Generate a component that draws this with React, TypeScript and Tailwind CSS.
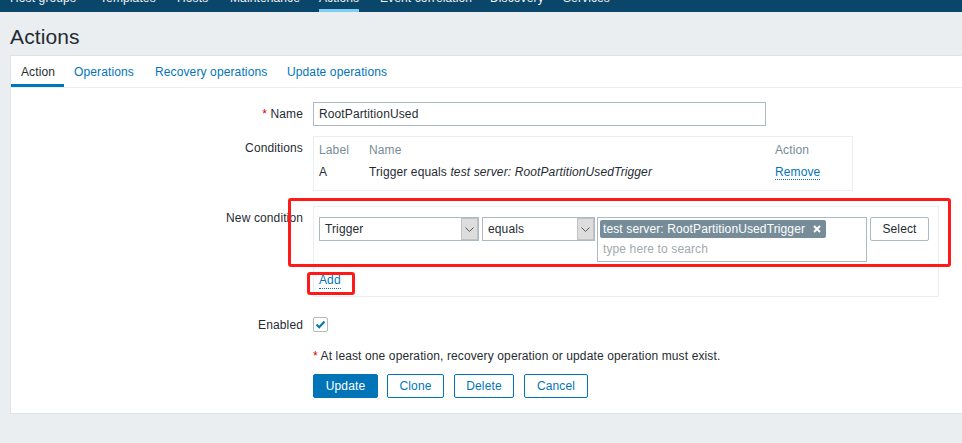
import React from 'react';

const navItems: { label: string; w: string }[] = [
  { label: 'Host groups', w: 'w-[90px]' },
  { label: 'Templates', w: 'w-[77px]' },
  { label: 'Hosts', w: 'w-[53px]' },
  { label: 'Maintenance', w: 'w-[89px]' },
  { label: 'Actions', w: 'w-[61px]' },
  { label: 'Event correlation', w: 'w-[110px]' },
  { label: 'Discovery', w: 'w-[73px]' },
  { label: 'Services', w: 'w-[70px]' },
];

const tabs: { label: string; w: string }[] = [
  { label: 'Action', w: 'w-[53px]' },
  { label: 'Operations', w: 'w-[81px]' },
  { label: 'Recovery operations', w: 'w-[132px]' },
  { label: 'Update operations', w: 'w-[120px]' },
];

const Chevron: React.FC = () => (
  <svg width="9" height="5" viewBox="0 0 9 5" fill="none">
    <path d="M0.5 0.5L4.5 4.5L8.5 0.5" stroke="#5a5a5a" strokeWidth="1" />
  </svg>
);

const SelectBox: React.FC<{ value: string; width: string }> = ({ value, width }) => (
  <div className={`${width} h-[24px] flex border border-[#acbbc2] bg-white`}>
    <div className="flex-1 flex items-center pl-[5px] text-[#1f2c33]">{value}</div>
    <div className="w-[17px] h-full bg-[#dddddd] border border-[#c2c2c2] flex items-center justify-center">
      <Chevron />
    </div>
  </div>
);

const FormRow: React.FC<{ label: React.ReactNode; className?: string; labelClass?: string; children: React.ReactNode }> = ({
  label,
  className = '',
  labelClass = '',
  children,
}) => (
  <div className={`flex ${className}`}>
    <div className={`w-[292px] text-right text-[#1f2c33] leading-[14px] ${labelClass}`}>{label}</div>
    <div className="ml-[10px] flex-1">{children}</div>
  </div>
);

const App: React.FC = () => {
  return (
    <div className="relative w-[962px] h-[443px] overflow-hidden bg-[#ebeef0] font-['Liberation_Sans',Arial,sans-serif] text-[12px] tracking-[0.12px]">
      {/* Top navigation (scrolled, only bottom visible) */}
      <div className="h-[12px] bg-[#0a466a] overflow-hidden flex pl-[10px]">
        {navItems.map((item) => (
          <div key={item.label} className={`h-full shrink-0 ${item.w}`}>
            <div className="relative w-fit mt-[-8px] h-[20px] leading-[12px] text-[#f2f2f2] whitespace-nowrap">
              {item.label}
              {item.label === 'Actions' && <div className="absolute left-0 right-0 top-[17px] h-[3px] bg-[#7fcdf5]" />}
            </div>
          </div>
        ))}
      </div>

      {/* Title */}
      <div className="pt-[13px] pb-[6px] pl-[10px]">
        <h1 className="text-[21px] leading-[24px] text-[#1f2c33]">Actions</h1>
      </div>

      {/* Main container */}
      <div className="ml-[10px] bg-white border border-r-0 border-[#dfe4e7] h-[359px]">
        {/* Tabs */}
        <div className="flex h-[32px] border-b border-[#ebeef0]">
          {tabs.map((t, i) => (
            <div
              key={t.label}
              className={
                i === 0
                  ? `${t.w} h-[31px] pl-[10px] flex items-center text-[#1f2c33] border-b-[3px] border-[#0275b8] pt-[3px] whitespace-nowrap`
                  : `${t.w} h-[31px] pl-[10px] flex items-center text-[#0275b8] whitespace-nowrap`
              }
            >
              {t.label}
            </div>
          ))}
        </div>

        <div className="pt-[14px] pb-[15px]">
          {/* Name */}
          <FormRow
            label={
              <>
                <span className="text-[#dc0000]">*</span> Name
              </>
            }
            className="items-center"
          >
            <div className="w-[453px] h-[24px] border border-[#acbbc2] flex items-center pl-[5px] text-[#1f2c33]">
              RootPartitionUsed
            </div>
          </FormRow>

          {/* Conditions */}
          <FormRow label="Conditions" className="mt-[10px]" labelClass="pt-[5px]">
            <div className="w-[540px] border border-[#ebeef0] pt-[6px] pb-[11px] pl-[5px] leading-[14px]">
              <div className="flex text-[#768d99]">
                <div className="w-[50px]">Label</div>
                <div className="w-[406px]">Name</div>
                <div>Action</div>
              </div>
              <div className="flex mt-[8px] text-[#1f2c33]">
                <div className="w-[50px]">A</div>
                <div className="w-[406px] whitespace-nowrap">
                  Trigger equals <i>test server: RootPartitionUsedTrigger</i>
                </div>
                <div>
                  <span className="text-[#0275b8] border-b border-dotted border-[#0275b8]">Remove</span>
                </div>
              </div>
            </div>
          </FormRow>

          {/* New condition */}
          <FormRow label="New condition" className="mt-[15px]" labelClass="pt-[5px]">
            <div className="w-[626px] border border-[#ebeef0] pt-[10px] pb-[9px] pl-[5px]">
              <div className="flex items-start">
                <SelectBox value="Trigger" width="w-[160px]" />
                <div className="ml-[3px]">
                  <SelectBox value="equals" width="w-[113px]" />
                </div>
                <div className="ml-[2px] w-[270px] h-[45px] border border-[#acbbc2] pt-[2px] pl-[2px]">
                  <div className="inline-flex items-center h-[18px] bg-[#768d99] text-white rounded-[2px] pl-[3px] pr-[5px] whitespace-nowrap">
                    test server: RootPartitionUsedTrigger
                    <svg className="ml-[8px]" width="8" height="8" viewBox="0 0 8 8">
                      <path d="M1 1L7 7M7 1L1 7" stroke="#ffffff" strokeWidth="2" />
                    </svg>
                  </div>
                  <div className="pl-[3px] mt-[4px] leading-[14px] text-[#a3a9ad]">type here to search</div>
                </div>
                <button className="ml-[3px] w-[59px] h-[24px] border border-[#acbbc2] rounded-[2px] bg-white text-[#1f2c33]">
                  Select
                </button>
              </div>
              <div className="mt-[11px] leading-[14px]">
                <span className="text-[#0275b8] border-b border-dotted border-[#0275b8] pb-[1px]">Add</span>
              </div>
            </div>
          </FormRow>

          {/* Enabled */}
          <FormRow label="Enabled" className="mt-[20px] items-center">
            <div className="w-[15px] h-[15px] border border-[#acbbc2] rounded-[2px] flex items-center justify-center">
              <svg width="11" height="9" viewBox="0 0 11 9" fill="none">
                <path d="M1.5 4.5L4.2 7.2L9.5 1.5" stroke="#0275b8" strokeWidth="2" />
              </svg>
            </div>
          </FormRow>

          {/* Note */}
          <FormRow label="" className="mt-[17px]">
            <div className="leading-[14px] text-[#1f2c33] whitespace-nowrap">
              <span className="text-[#dc0000]">*</span> At least one operation, recovery operation or update operation
              must exist.
            </div>
          </FormRow>

          {/* Buttons */}
          <FormRow label="" className="mt-[11px]">
            <div className="flex">
              <button className="w-[65px] h-[24px] bg-[#0275b8] border border-[#0275b8] text-white rounded-[2px]">
                Update
              </button>
              <button className="ml-[9px] w-[57px] h-[24px] bg-white border border-[#0275b8] text-[#0275b8] rounded-[2px]">
                Clone
              </button>
              <button className="ml-[10px] w-[60px] h-[24px] bg-white border border-[#0275b8] text-[#0275b8] rounded-[2px]">
                Delete
              </button>
              <button className="ml-[10px] w-[64px] h-[24px] bg-white border border-[#0275b8] text-[#0275b8] rounded-[2px]">
                Cancel
              </button>
            </div>
          </FormRow>
        </div>
      </div>

      {/* Red annotation boxes */}
      <div className="absolute left-[288px] top-[198px] w-[663px] h-[69px] border-[3px] border-[#ff1a1a] rounded-[3px]" />
      <div className="absolute left-[307px] top-[272px] w-[48px] h-[23px] border-[3px] border-[#ff1a1a] rounded-[3px]" />
    </div>
  );
};

export default App;
